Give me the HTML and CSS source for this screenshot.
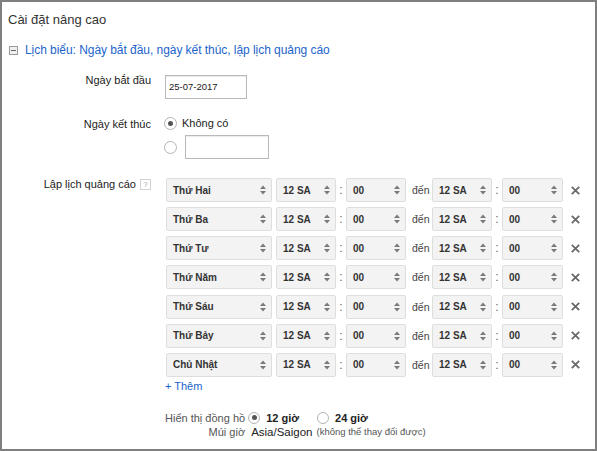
FILE: index.html
```html
<!DOCTYPE html>
<html lang="vi">
<head>
<meta charset="utf-8">
<title>Cài đặt nâng cao</title>
<link rel="stylesheet" href="styles.css">
</head>
<body>
<div class="frame">
  <div class="title">Cài đặt nâng cao</div>
  <div class="section">
    <span class="collapse"><span class="minus"></span></span>
    <span class="section-link">Lịch biểu: Ngày bắt đầu, ngày kết thúc, lập lịch quảng cáo</span>
  </div>

  <div class="form">
    <div class="label l-start">Ngày bắt đầu</div>
    <div class="field f-start"><div class="input date">25-07-2017</div></div>

    <div class="label l-end">Ngày kết thúc</div>
    <div class="field f-end">
      <div class="radio-line"><span class="radio checked"></span><span class="rtext">Không có</span></div>
      <div class="radio-line second"><span class="radio"></span><div class="input empty"></div></div>
    </div>

    <div class="label l-sched">Lập lịch quảng cáo <span class="help">?</span></div>
    <div class="field f-sched">
      <div class="rows">
        <div class="row">
          <div class="sel day"><span>Thứ Hai</span><svg class="arr" viewBox="0 0 6 10"><path d="M0 4L3 0.6L6 4Z M0 6L3 9.4L6 6Z"/></svg></div>
          <div class="sel hr"><span>12 SA</span><svg class="arr" viewBox="0 0 6 10"><path d="M0 4L3 0.6L6 4Z M0 6L3 9.4L6 6Z"/></svg></div>
          <span class="colon">:</span>
          <div class="sel mn"><span>00</span><svg class="arr" viewBox="0 0 6 10"><path d="M0 4L3 0.6L6 4Z M0 6L3 9.4L6 6Z"/></svg></div>
          <span class="to">đến</span>
          <div class="sel hr"><span>12 SA</span><svg class="arr" viewBox="0 0 6 10"><path d="M0 4L3 0.6L6 4Z M0 6L3 9.4L6 6Z"/></svg></div>
          <span class="colon">:</span>
          <div class="sel mn2"><span>00</span><svg class="arr" viewBox="0 0 6 10"><path d="M0 4L3 0.6L6 4Z M0 6L3 9.4L6 6Z"/></svg></div>
          <svg class="x" viewBox="0 0 9 9"><path d="M0.8 0.8L8.2 8.2M8.2 0.8L0.8 8.2"/></svg>
        </div>
        <div class="row">
          <div class="sel day"><span>Thứ Ba</span><svg class="arr" viewBox="0 0 6 10"><path d="M0 4L3 0.6L6 4Z M0 6L3 9.4L6 6Z"/></svg></div>
          <div class="sel hr"><span>12 SA</span><svg class="arr" viewBox="0 0 6 10"><path d="M0 4L3 0.6L6 4Z M0 6L3 9.4L6 6Z"/></svg></div>
          <span class="colon">:</span>
          <div class="sel mn"><span>00</span><svg class="arr" viewBox="0 0 6 10"><path d="M0 4L3 0.6L6 4Z M0 6L3 9.4L6 6Z"/></svg></div>
          <span class="to">đến</span>
          <div class="sel hr"><span>12 SA</span><svg class="arr" viewBox="0 0 6 10"><path d="M0 4L3 0.6L6 4Z M0 6L3 9.4L6 6Z"/></svg></div>
          <span class="colon">:</span>
          <div class="sel mn2"><span>00</span><svg class="arr" viewBox="0 0 6 10"><path d="M0 4L3 0.6L6 4Z M0 6L3 9.4L6 6Z"/></svg></div>
          <svg class="x" viewBox="0 0 9 9"><path d="M0.8 0.8L8.2 8.2M8.2 0.8L0.8 8.2"/></svg>
        </div>
        <div class="row">
          <div class="sel day"><span>Thứ Tư</span><svg class="arr" viewBox="0 0 6 10"><path d="M0 4L3 0.6L6 4Z M0 6L3 9.4L6 6Z"/></svg></div>
          <div class="sel hr"><span>12 SA</span><svg class="arr" viewBox="0 0 6 10"><path d="M0 4L3 0.6L6 4Z M0 6L3 9.4L6 6Z"/></svg></div>
          <span class="colon">:</span>
          <div class="sel mn"><span>00</span><svg class="arr" viewBox="0 0 6 10"><path d="M0 4L3 0.6L6 4Z M0 6L3 9.4L6 6Z"/></svg></div>
          <span class="to">đến</span>
          <div class="sel hr"><span>12 SA</span><svg class="arr" viewBox="0 0 6 10"><path d="M0 4L3 0.6L6 4Z M0 6L3 9.4L6 6Z"/></svg></div>
          <span class="colon">:</span>
          <div class="sel mn2"><span>00</span><svg class="arr" viewBox="0 0 6 10"><path d="M0 4L3 0.6L6 4Z M0 6L3 9.4L6 6Z"/></svg></div>
          <svg class="x" viewBox="0 0 9 9"><path d="M0.8 0.8L8.2 8.2M8.2 0.8L0.8 8.2"/></svg>
        </div>
        <div class="row">
          <div class="sel day"><span>Thứ Năm</span><svg class="arr" viewBox="0 0 6 10"><path d="M0 4L3 0.6L6 4Z M0 6L3 9.4L6 6Z"/></svg></div>
          <div class="sel hr"><span>12 SA</span><svg class="arr" viewBox="0 0 6 10"><path d="M0 4L3 0.6L6 4Z M0 6L3 9.4L6 6Z"/></svg></div>
          <span class="colon">:</span>
          <div class="sel mn"><span>00</span><svg class="arr" viewBox="0 0 6 10"><path d="M0 4L3 0.6L6 4Z M0 6L3 9.4L6 6Z"/></svg></div>
          <span class="to">đến</span>
          <div class="sel hr"><span>12 SA</span><svg class="arr" viewBox="0 0 6 10"><path d="M0 4L3 0.6L6 4Z M0 6L3 9.4L6 6Z"/></svg></div>
          <span class="colon">:</span>
          <div class="sel mn2"><span>00</span><svg class="arr" viewBox="0 0 6 10"><path d="M0 4L3 0.6L6 4Z M0 6L3 9.4L6 6Z"/></svg></div>
          <svg class="x" viewBox="0 0 9 9"><path d="M0.8 0.8L8.2 8.2M8.2 0.8L0.8 8.2"/></svg>
        </div>
        <div class="row">
          <div class="sel day"><span>Thứ Sáu</span><svg class="arr" viewBox="0 0 6 10"><path d="M0 4L3 0.6L6 4Z M0 6L3 9.4L6 6Z"/></svg></div>
          <div class="sel hr"><span>12 SA</span><svg class="arr" viewBox="0 0 6 10"><path d="M0 4L3 0.6L6 4Z M0 6L3 9.4L6 6Z"/></svg></div>
          <span class="colon">:</span>
          <div class="sel mn"><span>00</span><svg class="arr" viewBox="0 0 6 10"><path d="M0 4L3 0.6L6 4Z M0 6L3 9.4L6 6Z"/></svg></div>
          <span class="to">đến</span>
          <div class="sel hr"><span>12 SA</span><svg class="arr" viewBox="0 0 6 10"><path d="M0 4L3 0.6L6 4Z M0 6L3 9.4L6 6Z"/></svg></div>
          <span class="colon">:</span>
          <div class="sel mn2"><span>00</span><svg class="arr" viewBox="0 0 6 10"><path d="M0 4L3 0.6L6 4Z M0 6L3 9.4L6 6Z"/></svg></div>
          <svg class="x" viewBox="0 0 9 9"><path d="M0.8 0.8L8.2 8.2M8.2 0.8L0.8 8.2"/></svg>
        </div>
        <div class="row">
          <div class="sel day"><span>Thứ Bảy</span><svg class="arr" viewBox="0 0 6 10"><path d="M0 4L3 0.6L6 4Z M0 6L3 9.4L6 6Z"/></svg></div>
          <div class="sel hr"><span>12 SA</span><svg class="arr" viewBox="0 0 6 10"><path d="M0 4L3 0.6L6 4Z M0 6L3 9.4L6 6Z"/></svg></div>
          <span class="colon">:</span>
          <div class="sel mn"><span>00</span><svg class="arr" viewBox="0 0 6 10"><path d="M0 4L3 0.6L6 4Z M0 6L3 9.4L6 6Z"/></svg></div>
          <span class="to">đến</span>
          <div class="sel hr"><span>12 SA</span><svg class="arr" viewBox="0 0 6 10"><path d="M0 4L3 0.6L6 4Z M0 6L3 9.4L6 6Z"/></svg></div>
          <span class="colon">:</span>
          <div class="sel mn2"><span>00</span><svg class="arr" viewBox="0 0 6 10"><path d="M0 4L3 0.6L6 4Z M0 6L3 9.4L6 6Z"/></svg></div>
          <svg class="x" viewBox="0 0 9 9"><path d="M0.8 0.8L8.2 8.2M8.2 0.8L0.8 8.2"/></svg>
        </div>
        <div class="row">
          <div class="sel day"><span>Chủ Nhật</span><svg class="arr" viewBox="0 0 6 10"><path d="M0 4L3 0.6L6 4Z M0 6L3 9.4L6 6Z"/></svg></div>
          <div class="sel hr"><span>12 SA</span><svg class="arr" viewBox="0 0 6 10"><path d="M0 4L3 0.6L6 4Z M0 6L3 9.4L6 6Z"/></svg></div>
          <span class="colon">:</span>
          <div class="sel mn"><span>00</span><svg class="arr" viewBox="0 0 6 10"><path d="M0 4L3 0.6L6 4Z M0 6L3 9.4L6 6Z"/></svg></div>
          <span class="to">đến</span>
          <div class="sel hr"><span>12 SA</span><svg class="arr" viewBox="0 0 6 10"><path d="M0 4L3 0.6L6 4Z M0 6L3 9.4L6 6Z"/></svg></div>
          <span class="colon">:</span>
          <div class="sel mn2"><span>00</span><svg class="arr" viewBox="0 0 6 10"><path d="M0 4L3 0.6L6 4Z M0 6L3 9.4L6 6Z"/></svg></div>
          <svg class="x" viewBox="0 0 9 9"><path d="M0.8 0.8L8.2 8.2M8.2 0.8L0.8 8.2"/></svg>
        </div>
      </div>
      <div class="add">+ Thêm</div>
      <div class="clock">
        <div class="clabel">Hiển thị đồng hồ</div>
        <div class="copts">
          <span class="radio sm checked"></span><span class="bold">12 giờ</span>
          <span class="radio sm r24"></span><span class="bold">24 giờ</span>
        </div>
        <div class="clabel">Múi giờ</div>
        <div class="copts tz"><span class="tzname">Asia/Saigon</span><span class="note">(không thể thay đổi được)</span></div>
      </div>
    </div>
  </div>
</div>
</body>
</html>
```

FILE: styles.css
```css
* { box-sizing: border-box; }
html, body { margin: 0; padding: 0; background: #fff; }
body {
  font-family: "Liberation Sans", Arial, sans-serif;
  color: #333;
  font-size: 11px;
}
.frame {
  width: 597px;
  height: 451px;
  border: 2px solid #7f7f7f;
  overflow: hidden;
}
.title {
  font-size: 13px;
  line-height: 16px;
  padding: 10px 0 0 6px;
  color: #333;
}
.section {
  display: flex;
  align-items: center;
  margin-top: 14px;
  height: 16px;
  padding-left: 7px;
}
.collapse {
  width: 9px;
  height: 9px;
  border: 1px solid #9a9a9a;
  background: #f0f0f0;
  display: flex;
  align-items: center;
  justify-content: center;
  margin-right: 7px;
}
.minus { width: 5px; height: 1px; background: #666; }
.section-link {
  color: #1c64cc;
  font-size: 12px;
  line-height: 16px;
  letter-spacing: -0.05px;
}
.form {
  display: grid;
  grid-template-columns: 149px 1fr;
  column-gap: 14px;
  align-items: start;
  margin-top: 14px;
}
.label {
  text-align: right;
  line-height: 16px;
  font-size: 11px;
  color: #222;
  white-space: nowrap;
}
.f-start { padding-top: 3px; }
.input {
  border: 1px solid #b9b9b9;
  background: #fff;
  height: 24px;
  box-shadow: inset 0 1px 1px rgba(0,0,0,0.08);
}
.date {
  width: 82px;
  font-size: 9.5px;
  line-height: 22px;
  padding-left: 3px;
  color: #222;
}
.f-end { margin-top: 16px; }
.l-end { margin-top: 17px; }
.radio-line { display: flex; align-items: center; height: 16px; }
.radio-line.second { height: 24px; margin-top: 4px; }
.radio {
  width: 13px;
  height: 13px;
  border-radius: 50%;
  border: 1px solid #b4b4b4;
  background: #fff;
  display: inline-flex;
  align-items: center;
  justify-content: center;
  flex: none;
}
.radio.checked::after {
  content: "";
  width: 5px;
  height: 5px;
  border-radius: 50%;
  background: #555;
}
.f-end .radio { margin-left: -1px; }
.rtext { margin-left: 5px; color: #222; font-size: 11px; }
.empty { width: 84px; margin-left: 8px; }
.l-sched, .f-sched { margin-top: 17px; }
.l-sched {
  display: flex;
  justify-content: flex-end;
  align-items: center;
  height: 16px;
}
.help {
  display: inline-flex;
  width: 11px;
  height: 11px;
  border: 1px solid #d2d2d2;
  color: #aaa;
  font-size: 8px;
  line-height: 9px;
  align-items: center;
  justify-content: center;
  margin-left: 4px;
}
.rows {
  display: flex;
  flex-direction: column;
  gap: 5.17px;
  margin-top: 2px;
  padding-left: 1px;
}
.row { display: flex; align-items: center; height: 24px; }
.sel {
  height: 24px;
  background: #f3f3f3;
  border: 1px solid #dedede;
  border-radius: 2px;
  display: flex;
  align-items: center;
  justify-content: space-between;
  padding: 0 5px 0 6px;
  font-size: 10px;
  font-weight: bold;
  color: #333;
  flex: none;
}
.day { width: 106px; margin-right: 4px; }
.hr { width: 60px; }
.mn { width: 60px; }
.mn2 { width: 61px; }
.arr { width: 6px; height: 10px; fill: #7a7a7a; }
.colon {
  width: 10px;
  text-align: center;
  color: #666;
  font-size: 12px;
  flex: none;
}
.to {
  width: 26px;
  padding-left: 6px;
  font-size: 10.5px;
  color: #444;
  flex: none;
}
.x {
  width: 9px;
  height: 9px;
  margin-left: 8px;
  stroke: #6a6a6a;
  stroke-width: 1.8;
  fill: none;
}
.add {
  color: #1c64cc;
  line-height: 14px;
  margin-top: 2px;
  font-size: 11px;
}
.clock {
  display: grid;
  grid-template-columns: max-content 1fr;
  column-gap: 3px;
  margin-top: 18px;
  line-height: 14px;
}
.clabel {
  text-align: right;
  color: #555;
  font-size: 11px;
}
.copts { display: flex; align-items: center; }
.radio.sm { width: 12px; height: 12px; }
.bold { font-weight: bold; margin-left: 6px; color: #222; font-size: 11px; }
.r24 { margin-left: 18px; }
.tzname { color: #222; margin-left: 3px; font-size: 11.5px; }
.note { font-size: 9.5px; color: #555; margin-left: 4px; }
```
